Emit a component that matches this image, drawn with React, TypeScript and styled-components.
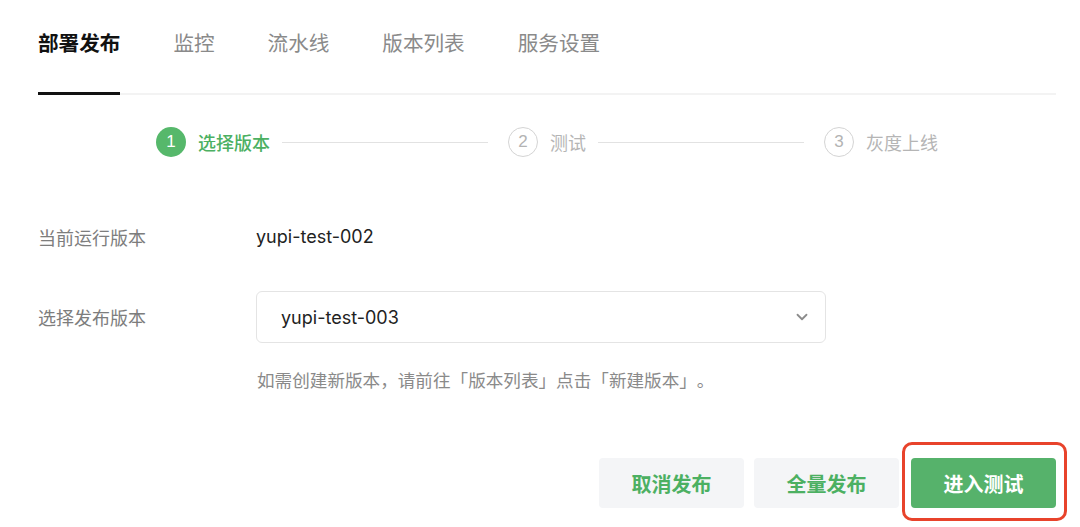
import React from 'react';
import styled, { createGlobalStyle } from 'styled-components';
import { ChevronDown } from 'lucide-react';

const GlobalStyle = createGlobalStyle`
  html, body {
    margin: 0;
    padding: 0;
    background: #ffffff;
  }
  body {
    font-family: "Inter", "Noto Sans CJK SC", sans-serif;
    -webkit-font-smoothing: antialiased;
  }
`;

const tabs = ['部署发布', '监控', '流水线', '版本列表', '服务设置'];

const steps = [
  { num: 1, title: '选择版本' },
  { num: 2, title: '测试' },
  { num: 3, title: '灰度上线' },
];

const App: React.FC = () => {
  return (
    <Page>
      <GlobalStyle />
      <TabBar>
        {tabs.map((t, i) => (
          <Tab key={t} $active={i === 0}>
            {t}
          </Tab>
        ))}
      </TabBar>

      <Steps>
        {steps.map((s, i) => (
          <React.Fragment key={s.num}>
            <Step>
              <StepIcon $active={i === 0}>{s.num}</StepIcon>
              <StepTitle $active={i === 0}>{s.title}</StepTitle>
            </Step>
            {i < steps.length - 1 && <StepLine />}
          </React.Fragment>
        ))}
      </Steps>

      <Form>
        <Row>
          <Label>当前运行版本</Label>
          <Value>yupi-test-002</Value>
        </Row>
        <Row>
          <Label>选择发布版本</Label>
          <Select>
            <span>yupi-test-003</span>
            <ChevronDown size={18} color="#8c8c8c" strokeWidth={2.4} />
          </Select>
        </Row>
        <Help>如需创建新版本，请前往「版本列表」点击「新建版本」。</Help>
      </Form>

      <Actions>
        <Button>取消发布</Button>
        <Button>全量发布</Button>
        <Button $primary $marked>进入测试</Button>
      </Actions>
    </Page>
  );
};

// 样式组件
const Page = styled.div`
  padding: 0 24px 0 38px;
`;

const TabBar = styled.div`
  display: flex;
  gap: 53px;
  border-bottom: 2px solid #f3f3f3;
`;

const Tab = styled.div<{ $active?: boolean }>`
  font-family: "Noto Sans CJK SC", sans-serif;
  font-size: 20.6px;
  line-height: 28px;
  padding: 28px 0 36px;
  margin-bottom: -2px;
  color: ${p => (p.$active ? '#111111' : '#8a8a8a')};
  font-weight: ${p => (p.$active ? 700 : 400)};
  border-bottom: 3px solid ${p => (p.$active ? '#111111' : 'transparent')};
`;

const Steps = styled.div`
  display: flex;
  align-items: center;
  width: 782px;
  margin: 32px auto 0;
`;

const Step = styled.div`
  display: flex;
  align-items: center;
  gap: 12px;
`;

const StepIcon = styled.div<{ $active?: boolean }>`
  width: 30px;
  height: 30px;
  box-sizing: border-box;
  border-radius: 50%;
  display: flex;
  align-items: center;
  justify-content: center;
  font-family: "Liberation Sans", "Noto Sans", sans-serif;
  font-size: 17px;
  background: ${p => (p.$active ? '#56b86b' : '#ffffff')};
  color: ${p => (p.$active ? '#ffffff' : '#b3b3b3')};
  border: ${p => (p.$active ? 'none' : '1.5px solid #d4d4d4')};
`;

const StepTitle = styled.div<{ $active?: boolean }>`
  font-family: "Noto Sans CJK SC", sans-serif;
  font-size: 18px;
  line-height: 26px;
  font-weight: ${p => (p.$active ? 500 : 400)};
  color: ${p => (p.$active ? '#4cb062' : '#b5b5b5')};
`;

const StepLine = styled.div`
  flex: 1;
  height: 1px;
  background: #e2e2e2;
  margin: 0 20px 0 12px;
`;

const Form = styled.div`
  margin-top: 65px;
  display: flex;
  flex-direction: column;
  gap: 39px;
`;

const Row = styled.div`
  display: flex;
  align-items: center;
`;

const Label = styled.div`
  width: 218px;
  flex-shrink: 0;
  font-family: "Noto Sans CJK SC", sans-serif;
  font-size: 18px;
  line-height: 30px;
  color: #7d7d7d;
`;

const Value = styled.div`
  font-size: 18px;
  line-height: 30px;
  color: #222222;
`;

const Select = styled.div`
  width: 570px;
  height: 52px;
  box-sizing: border-box;
  border: 1px solid #e4e4e4;
  border-radius: 6px;
  display: flex;
  align-items: center;
  justify-content: space-between;
  padding: 0 14px 0 24px;
  font-size: 18px;
  color: #222222;
`;

const Help = styled.div`
  margin: -12px 0 0 219px;
  font-family: "Noto Sans CJK SC", sans-serif;
  font-size: 17.6px;
  line-height: 20px;
  color: #8a8a8a;
  text-spacing-trim: space-all;
  font-feature-settings: normal;
`;

const Actions = styled.div`
  display: flex;
  justify-content: flex-end;
  gap: 10px;
  margin-top: 68px;
  padding-bottom: 20px;
`;

const Button = styled.button<{ $primary?: boolean; $marked?: boolean }>`
  position: relative;
  width: 145px;
  height: 50px;
  border: none;
  border-radius: 4px;
  font-family: "Noto Sans CJK SC", sans-serif;
  font-size: 20px;
  font-weight: 700;
  background: ${p => (p.$primary ? '#56b26b' : '#f4f5f7')};
  color: ${p => (p.$primary ? '#ffffff' : '#4cb062')};
  margin-left: ${p => (p.$marked ? '2px' : '0')};

  &::after {
    content: '';
    display: ${p => (p.$marked ? 'block' : 'none')};
    position: absolute;
    top: -16px;
    bottom: -13px;
    left: -9px;
    right: -11px;
    border: 3px solid #e8432b;
    border-radius: 10px;
  }
`;

export default App;
